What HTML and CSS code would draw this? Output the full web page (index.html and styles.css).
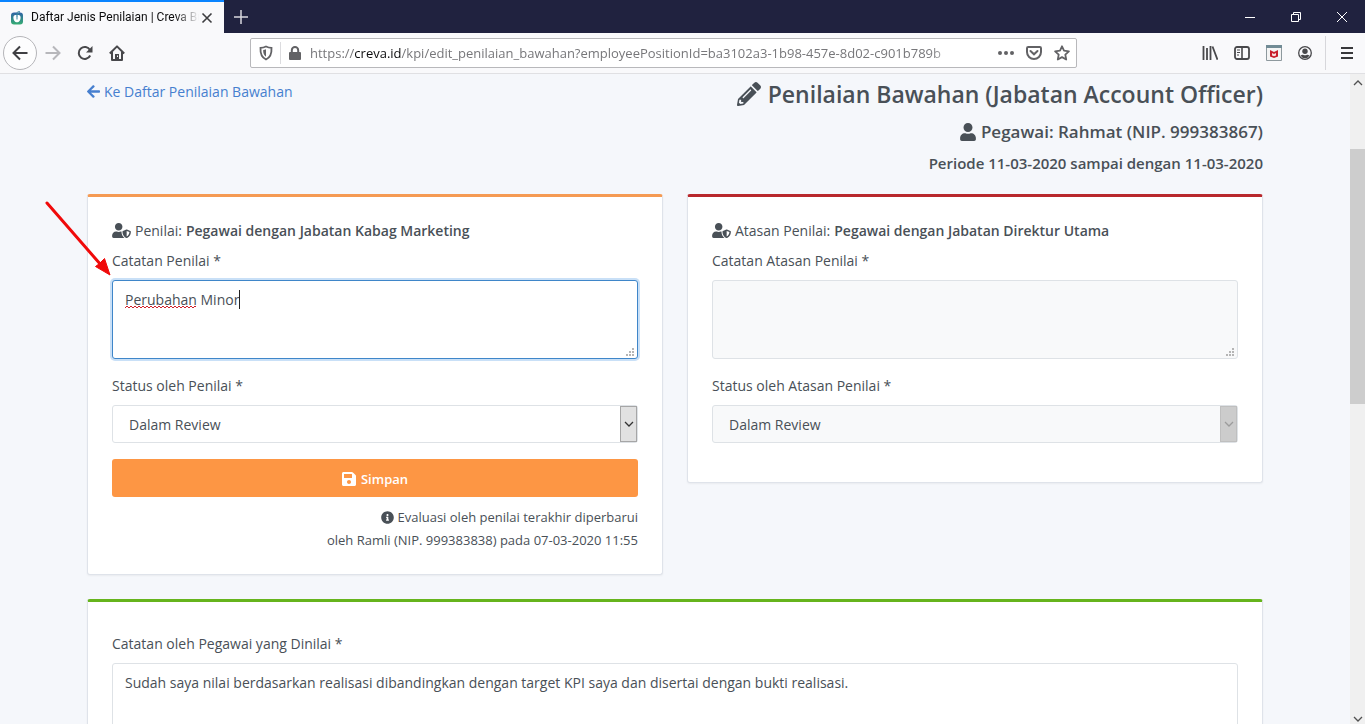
FILE: index.html
```html
<!DOCTYPE html>
<html lang="id">
<head>
<meta charset="utf-8">
<title>Daftar Jenis Penilaian | Creva</title>
<link rel="stylesheet" href="styles.css">
</head>
<body>
<svg class="defs" aria-hidden="true">
  <symbol id="i-shield-user" viewBox="0 0 640 512"><path d="M622.3 271.1l-115.2-45c-4.1-1.6-12.6-3.7-22.2 0l-115.2 45c-10.7 4.2-17.7 14-17.7 24.9 0 111.6 68.7 188.8 132.9 213.9 9.6 3.7 18 1.6 22.2 0C558.4 489.9 640 420.5 640 296c0-10.9-7-20.7-17.7-24.9zM496 462.4V273.3l95.5 37.3c-5.6 87.1-60.9 135.4-95.5 151.8zM224 256c70.7 0 128-57.3 128-128S294.7 0 224 0 96 57.3 96 128s57.3 128 128 128zm96 40c0-2.5.8-4.8 1.1-7.2-2.5-.1-4.9-.8-7.5-.8h-16.7c-22.2 10.2-46.9 16-72.9 16s-50.6-5.8-72.9-16h-16.7C60.2 288 0 348.2 0 422.4V464c0 26.5 21.5 48 48 48h352c6.8 0 13.3-1.5 19.2-4-54-42.9-99.2-116.7-99.2-212z"/></symbol>
  <symbol id="i-grip" viewBox="0 0 8 8"><path d="M6 0h2v2H6zM3 3h2v2H3zM6 3h2v2H6zM0 6h2v2H0zM3 6h2v2H3zM6 6h2v2H6z"/></symbol>
  <symbol id="i-chevron" viewBox="0 0 10 6"><path d="M1 1l4 4 4-4" fill="none" stroke="currentColor" stroke-width="1.3"/></symbol>
</svg>

<header class="browser">
  <div class="tabs">
    <div class="tab">
      <svg class="favicon" viewBox="0 0 14 14"><defs><linearGradient id="fav" x2="0" y2="1"><stop stop-color="#2f62a5"/><stop offset="1" stop-color="#35ad72"/></linearGradient></defs><rect x="1" y="1.5" width="12" height="12" rx="3" fill="url(#fav)"/><path d="M7 4.5C5 3.3 3.2 4.5 3.4 7c.2 2.700 1.800 4.600 3.600 4.300 1.800.3 3.400-1.600 3.600-4.300C10.800 4.500 9 3.300 7 4.500z" fill="#fff"/><path d="M7 6V2.500C7 1 8 .3 9.500.3 9.500 2 8.600 2.800 7 2.800M7 5.500v3" stroke="#3b87a0" fill="none"/></svg>
      <span class="tab-title">Daftar Jenis Penilaian | Creva Bu</span>
      <button class="plain" aria-label="Tutup tab"><svg width="12" height="12" viewBox="0 0 12 12"><path d="M1.500 1.500l9 9M10.500 1.500l-9 9" stroke="#3d3d40" stroke-width="1.600"/></svg></button>
    </div>
    <button class="plain new-tab" aria-label="Tab baru"><svg width="14" height="14" viewBox="0 0 14 14"><path d="M7 0v14M0 7h14" stroke="#d8d8de" stroke-width="1.500"/></svg></button>
    <div class="window-controls">
      <button class="plain" aria-label="Kecilkan"><svg width="10" height="10" viewBox="0 0 10 10"><path d="M0 5.500h10" stroke="#fff"/></svg></button>
      <button class="plain" aria-label="Pulihkan"><svg width="10" height="10" viewBox="0 0 10 10"><path d="M.5 2.500h7v7h-7zM2.500 2.500v-2h7v7h-2" fill="none" stroke="#fff"/></svg></button>
      <button class="plain" aria-label="Tutup"><svg width="10" height="10" viewBox="0 0 10 10"><path d="M0 0l10 10M10 0L0 10" stroke="#fff"/></svg></button>
    </div>
  </div>
  <div class="toolbar">
    <div class="nav-buttons">
      <button class="plain back" aria-label="Kembali"><svg width="16" height="16" viewBox="0 0 16 16"><path d="M15.500 8H1.500M8 1.500L1.500 8 8 14.500" fill="none" stroke="#3f3f43" stroke-width="2"/></svg></button>
      <button class="plain" aria-label="Maju"><svg width="16" height="16" viewBox="0 0 16 16"><path d="M.5 8h14M8 1.500L14.500 8 8 14.500" fill="none" stroke="#b7b7bb" stroke-width="2"/></svg></button>
      <button class="plain" aria-label="Muat ulang"><svg width="16" height="16" viewBox="0 0 16 16"><path d="M13.200 10.500A6 6 0 1 1 13 5" fill="none" stroke="#48484b" stroke-width="2"/><path d="M15.500 1v6.500H9z" fill="#48484b"/></svg></button>
      <button class="plain" aria-label="Beranda"><svg width="16" height="16" viewBox="0 0 16 16"><path d="M.8 8.500L8 1.400l7.200 7.100M3 7v8h10V7" fill="none" stroke="#48484b" stroke-width="2" stroke-linejoin="round"/><path d="M6 9h4v6H6z" fill="#48484b"/><path d="M8 10.500h1V12H8z" fill="#fff"/></svg></button>
    </div>
    <div class="url-bar">
      <svg class="shield" width="14" height="16" viewBox="0 0 14 16"><path d="M7 1.500c2 1 4 1.300 5.500 1.300C12.800 8 11.500 12.500 7 14.500 2.500 12.500 1.200 8 1.500 2.800 3 2.800 5 2.500 7 1.500z" fill="none" stroke="#626265" stroke-width="1.800"/><path d="M7 4.200v7.600C5 10.500 4 8 4.200 5 5.200 5 6.200 4.700 7 4.200z" fill="#626265"/></svg>
      <span class="divider"></span>
      <svg width="12" height="14" viewBox="0 0 12 14"><rect y="6" width="12" height="8" rx="1" fill="#626265"/><path d="M2.800 7V4.200a3.200 3.200 0 0 1 6.400 0V7" fill="none" stroke="#626265" stroke-width="2"/></svg>
      <div class="url">https://<b>creva.id</b>/kpi/edit_penilaian_bawahan?employeePositionId=ba3102a3-1b98-457e-8d02-c901b789b</div>
      <svg width="16" height="4" viewBox="0 0 16 4"><g fill="#626265"><circle cx="2" cy="2" r="2"/><circle cx="8" cy="2" r="2"/><circle cx="14" cy="2" r="2"/></g></svg>
      <svg width="16" height="14" viewBox="0 0 16 14"><path d="M2.200 1h11.600q1.200 0 1.200 1.200V6c0 4-3.200 7-7 7S1 10 1 6V2.200Q1 1 2.200 1z" fill="none" stroke="#626265" stroke-width="2"/><path d="M4.500 5L8 8.300 11.500 5" fill="none" stroke="#626265" stroke-width="2" stroke-linecap="round"/></svg>
      <svg width="16" height="16" viewBox="0 0 16 16"><path d="M8 1.300l2 4.400 4.900.6-3.600 3.300.9 4.900L8 12.100l-4.200 2.400.9-4.900L1.100 6.300 6 5.700z" fill="none" stroke="#626265" stroke-width="1.800" stroke-linejoin="round"/></svg>
    </div>
    <div class="tools">
      <svg width="16" height="14" viewBox="0 0 16 14"><path d="M1.500 0v14M5 2v12M8.500 0v14M10.500.5l5 13.200" stroke="#48484b" stroke-width="1.800"/></svg>
      <svg width="16" height="14" viewBox="0 0 16 14"><rect x="1" y="1" width="14" height="12" rx="2" fill="none" stroke="#48484b" stroke-width="1.800"/><path d="M8 1v12" stroke="#48484b" stroke-width="1.600"/><path d="M3 4h3M3 6.500h3M3 9h2" stroke="#48484b"/></svg>
      <svg width="16" height="16" viewBox="0 0 16 16"><path d="M.5.500h15v15H.500z" fill="#f4f4f4" stroke="#8e999e"/><path d="M0 0h16v3H0z" fill="#718b95"/><path d="M4 5l4 2 4-2v6.500L8 13l-4-1.500z" fill="#c81e2b"/><path d="M6 8l2 1 2-1v2.500l-2 .7-2-.7z" fill="#f7dede"/></svg>
      <svg width="14" height="14" viewBox="0 0 14 14"><circle cx="7" cy="7" r="6.300" fill="none" stroke="#48484b" stroke-width="1.300"/><circle cx="7" cy="5.300" r="2.700" fill="#48484b"/><path d="M2.500 9.500Q4 8.500 5 8.700q2 1 4 0 1-.2 2.500.8Q10 12.200 7 12.200T2.500 9.500z" fill="#48484b"/></svg>
      <div class="menu"><svg width="12" height="12" viewBox="0 0 12 12"><path d="M0 1h12M0 6h12M0 11h12" stroke="#38383b" stroke-width="2"/></svg></div>
    </div>
  </div>
</header>

<div class="viewport">
  <main class="page">
    <div class="container">
      <div class="page-head">
        <a class="back-link" href="#"><svg width="13" height="15" viewBox="0 0 448 512"><path d="M257.5 445.1l-22.2 22.2c-9.4 9.4-24.6 9.4-33.9 0L7 273c-9.4-9.4-9.4-24.6 0-33.9L201.4 44.7c9.4-9.4 24.6-9.4 33.9 0l22.2 22.2c9.5 9.5 9.3 25-.4 34.3L136.6 216H424c13.3 0 24 10.7 24 24v32c0 13.3-10.700 24-24 24H136.600l120.500 114.800c9.800 9.300 10 24.800.4 34.300z"/></svg>Ke Daftar Penilaian Bawahan</a>
        <div class="titles">
          <h1><svg width="24" height="24" viewBox="0 0 512 512"><path d="M497.9 142.1l-46.1 46.1c-4.7 4.7-12.3 4.7-17 0l-111-111c-4.7-4.7-4.7-12.3 0-17l46.1-46.1c18.7-18.7 49.1-18.7 67.9 0l60.1 60.1c18.8 18.7 18.8 49.1 0 67.9zM284.2 99.8L21.6 362.4.4 483.9c-2.9 16.4 11.4 30.6 27.8 27.8l121.5-21.3 262.6-262.6c4.7-4.7 4.7-12.3 0-17l-111-111c-4.8-4.7-12.4-4.7-17.1 0zM124.1 339.9c-5.5-5.5-5.5-14.3 0-19.8l154-154c5.5-5.5 14.3-5.5 19.8 0s5.5 14.3 0 19.8l-154 154c-5.5 5.5-14.3 5.5-19.8 0zM88 424h48v36.3l-64.5 11.3-31.1-31.1L51.7 376H88v48z"/></svg>Penilaian Bawahan (Jabatan Account Officer)</h1>
          <h2><svg width="16" height="18" viewBox="0 0 448 512"><path d="M224 256c70.7 0 128-57.3 128-128S294.7 0 224 0 96 57.3 96 128s57.3 128 128 128zm89.6 32h-16.7c-22.2 10.2-46.9 16-72.9 16s-50.6-5.8-72.9-16h-16.7C60.2 288 0 348.2 0 422.4V464c0 26.5 21.5 48 48 48h352c26.5 0 48-21.5 48-48v-41.6c0-74.2-60.2-134.4-134.4-134.4z"/></svg>Pegawai: Rahmat (NIP. 999383867)</h2>
          <h3>Periode 11-03-2020 sampai dengan 11-03-2020</h3>
        </div>
      </div>

      <div class="cards">
        <form class="card card-orange">
          <p class="who"><svg width="19" height="15"><use href="#i-shield-user"/></svg>Penilai: <strong>Pegawai dengan Jabatan Kabag Marketing</strong></p>
          <label for="note1">Catatan Penilai *</label>
          <div class="field">
            <textarea id="note1" class="control focused" spellcheck="false">Perubahan Minor</textarea>
            <svg class="squiggle" width="71" height="4"><defs><pattern id="wave" width="4" height="4" patternUnits="userSpaceOnUse"><path d="M0 3l2-2 2 2" fill="none" stroke="#d0202a"/></pattern></defs><rect width="71" height="4" fill="url(#wave)"/></svg>
            <span class="caret"></span>
            <svg class="grip"><use href="#i-grip"/></svg>
          </div>
          <label for="status1">Status oleh Penilai *</label>
          <div class="field">
            <select id="status1" class="control"><option>Dalam Review</option></select>
            <span class="drop"><svg width="10" height="6"><use href="#i-chevron"/></svg></span>
          </div>
          <button type="button" class="save"><svg width="14" height="16" viewBox="0 0 448 512"><path d="M433.941 129.941l-83.882-83.882A48 48 0 0 0 316.118 32H48C21.490 32 0 53.490 0 80v352c0 26.510 21.490 48 48 48h352c26.510 0 48-21.490 48-48V163.882a48 48 0 0 0-14.059-33.941zM224 416c-35.346 0-64-28.654-64-64 0-35.346 28.654-64 64-64s64 28.654 64 64c0 35.346-28.654 64-64 64zm96-304.520V212c0 6.627-5.373 12-12 12H76c-6.627 0-12-5.373-12-12V108c0-6.627 5.373-12 12-12h228.520c3.183 0 6.235 1.264 8.485 3.515l3.480 3.480A11.996 11.996 0 0 1 320 111.480z"/></svg>Simpan</button>
          <p class="updated"><svg width="13" height="13" viewBox="0 0 512 512"><path d="M256 8C119.043 8 8 119.083 8 256c0 136.997 111.043 248 248 248s248-111.003 248-248C504 119.083 392.957 8 256 8zm0 110c23.196 0 42 18.804 42 42s-18.804 42-42 42-42-18.804-42-42 18.804-42 42-42zm56 254c0 6.627-5.373 12-12 12h-88c-6.627 0-12-5.373-12-12v-24c0-6.627 5.373-12 12-12h12v-64h-12c-6.627 0-12-5.373-12-12v-24c0-6.627 5.373-12 12-12h64c6.627 0 12 5.373 12 12v100h12c6.627 0 12 5.373 12 12v24z"/></svg>Evaluasi oleh penilai terakhir diperbarui<br>oleh Ramli (NIP. 999383838) pada 07-03-2020 11:55</p>
        </form>

        <form class="card card-red">
          <p class="who"><svg width="19" height="15"><use href="#i-shield-user"/></svg>Atasan Penilai: <strong>Pegawai dengan Jabatan Direktur Utama</strong></p>
          <label for="note2">Catatan Atasan Penilai *</label>
          <div class="field">
            <textarea id="note2" class="control" disabled></textarea>
            <svg class="grip"><use href="#i-grip"/></svg>
          </div>
          <label for="status2">Status oleh Atasan Penilai *</label>
          <div class="field">
            <select id="status2" class="control" disabled><option>Dalam Review</option></select>
            <span class="drop drop-off"><svg width="10" height="6"><use href="#i-chevron"/></svg></span>
          </div>
        </form>
      </div>

      <form class="card card-green">
        <label for="note3">Catatan oleh Pegawai yang Dinilai *</label>
        <div class="field">
          <textarea id="note3" class="control" spellcheck="false">Sudah saya nilai berdasarkan realisasi dibandingkan dengan target KPI saya dan disertai dengan bukti realisasi.</textarea>
        </div>
      </form>
    </div>
    <svg class="pointer" viewBox="0 0 68 78" aria-hidden="true"><path d="M2 2l54 62" stroke="#f00a0a" stroke-width="3" stroke-linecap="round"/><path d="M65 74L50.500 65.500l4-3 5-5z" fill="#f00a0a" stroke="#f00a0a"/></svg>
  </main>
  <div class="scrollbar" aria-hidden="true">
    <svg class="up" width="10" height="6"><use href="#i-chevron"/></svg>
    <div class="track"><div class="before"></div><div class="thumb"></div><div class="after"></div></div>
    <svg width="10" height="6"><use href="#i-chevron"/></svg>
  </div>
</div>
</body>
</html>
```

FILE: styles.css
```css
* { box-sizing: border-box; }

body {
  margin: 0;
  height: 100vh;
  display: flex;
  flex-direction: column;
  overflow: hidden;
  background: #f5f7fb;
  color: #495057;
  font: 14px/23px "Open Sans", "Noto Sans", sans-serif;
}

h1, h2, h3, p { margin: 0; }
svg { flex: none; }
.defs { position: absolute; width: 0; height: 0; }

.plain {
  display: flex;
  align-items: center;
  justify-content: center;
  padding: 0;
  border: 0;
  background: none;
}

/* Browser frame */
.tabs { display: flex; height: 33px; background: #20223f; }
.tab {
  display: flex;
  align-items: center;
  width: 224px;
  padding: 0 11px 0 10px;
  border-top: 2px solid #0a84ff;
  background: #f9f9fb;
}
.favicon { width: 14px; height: 14px; margin-right: 7px; }
.tab-title {
  flex: 1;
  overflow: hidden;
  white-space: nowrap;
  color: #0c0c0d;
  font-family: Roboto, "Open Sans", sans-serif;
  font-size: 12px;
  -webkit-mask-image: linear-gradient(to left, transparent, #000 24px);
  mask-image: linear-gradient(to left, transparent, #000 24px);
}
.tab .plain { margin-left: 2px; }
.new-tab { width: 34px; }
.window-controls { display: flex; margin-left: auto; }
.window-controls .plain { width: 46px; }

.toolbar {
  display: flex;
  align-items: center;
  height: 41px;
  border-bottom: 1px solid #e0e0e3;
  background: #f9f9fb;
}
.nav-buttons { display: flex; align-items: center; gap: 16px; width: 250px; padding-left: 3px; }
.back { width: 34px; height: 34px; margin-right: -8px; border: 1px solid #b5b5b9; border-radius: 50%; background: #fdfdfe; }
.url-bar {
  flex: 1;
  display: flex;
  align-items: center;
  gap: 12px;
  height: 30px;
  padding: 0 6px 0 8px;
  border: 1px solid #b8b8bb;
  border-radius: 2px;
  background: #fff;
}
.shield { margin-right: -5px; }
.divider { width: 1px; height: 22px; margin-right: -4px; background: #dcdcdf; }
.url {
  flex: 1;
  margin-right: 24px;
  margin-left: -3px;
  overflow: hidden;
  white-space: nowrap;
  color: #77777a;
  font-size: 13px;
  -webkit-mask-image: linear-gradient(to left, transparent, #000 32px);
  mask-image: linear-gradient(to left, transparent, #000 32px);
}
.url b { color: #0c0c0d; font-weight: 400; }
.tools { display: flex; align-items: center; gap: 16px; width: 288px; padding-left: 125px; }
.menu { display: flex; align-items: center; height: 34px; padding-left: 15px; margin-left: -3px; border-left: 1px solid #d7d7db; }

/* Page */
.viewport { flex: 1; display: flex; min-height: 0; }
.page { position: relative; flex: 1; overflow: hidden; }
.container { max-width: 1200px; margin: 0 auto; padding: 0 12px; }

.page-head { display: flex; justify-content: space-between; padding-top: 5px; margin-bottom: 19px; }
.page-head svg, .who svg, .save svg, .updated svg { fill: currentColor; }
.back-link { display: flex; align-items: center; gap: 4px; height: 25px; color: #467fcf; text-decoration: none; }
.titles { display: flex; flex-direction: column; align-items: flex-end; }
.titles h1, .titles h2 { display: flex; align-items: center; }
.titles h1 { gap: 7px; font-size: 23px; line-height: 30px; font-weight: 600; }
.titles h2 { gap: 5px; margin: 9px 0 5px; font-size: 17px; line-height: 28px; font-weight: 600; }
.titles h3 { font-size: 15px; line-height: 24px; font-weight: 600; }

.cards { display: grid; grid-template-columns: 1fr 1fr; align-items: start; gap: 24px; margin-bottom: 24px; }
.card {
  padding: 22px 24px 24px;
  border: 1px solid #dfe3ea;
  border-top: 3px solid;
  border-radius: 3px;
  background: #fff;
  box-shadow: 0 1px 2px rgba(0, 0, 0, .05);
}
.card-orange { border-top-color: #f59a53; }
.card-red { border-top-color: #b8282c; }
.card-green { border-top-color: #66b41c; padding-top: 30px; }

.who { display: flex; align-items: center; gap: 4px; margin-bottom: 7px; }
.who strong { font-weight: 600; }
label { display: block; margin-bottom: 8px; }
.field { position: relative; margin-bottom: 15px; }
.control {
  display: block;
  width: 100%;
  border: 1px solid #dee2e6;
  border-radius: 3px;
  outline: 0;
  background: #fff;
  color: #495057;
  font: inherit;
  appearance: none;
  opacity: 1;
}
.control:disabled { background: #f8f9fa; }
textarea.control { height: 79px; padding: 7px 12px; resize: none; overflow: hidden; }
select.control { height: 38px; padding: 0 32px 0 16px; }
.control.focused { border-color: #3f86c9; box-shadow: 0 0 0 2px #c9e0f7; }
.card-green .control { height: 120px; }

.grip { position: absolute; right: 4px; bottom: 3px; width: 8px; height: 8px; fill: #b5b5b5; }
.squiggle { position: absolute; left: 13px; top: 25px; }
.caret { position: absolute; left: 127px; top: 10px; width: 1px; height: 19px; background: #222; }
.drop {
  position: absolute;
  top: 1px;
  right: 1px;
  bottom: 1px;
  display: grid;
  place-items: center;
  width: 17px;
  border: 1px solid #a6a6a6;
  background: #e1e1e1;
  color: #333;
  pointer-events: none;
}
.drop-off { border-color: #bfbfbf; background: #ccc; color: #9c9c9c; }

.save {
  display: flex;
  align-items: center;
  justify-content: center;
  gap: 5px;
  width: 100%;
  height: 38px;
  margin-top: 16px;
  padding: 2px 0 0;
  border: 0;
  border-radius: 3px;
  background: #fd9644;
  color: #fff;
  font: 600 13px/23px "Open Sans", "Noto Sans", sans-serif;
}
.updated { margin-top: 9px; margin-bottom: -2px; text-align: right; font-size: 13px; }
.updated svg { margin-right: 4px; vertical-align: -2px; }

.pointer { position: absolute; left: 45px; top: 127px; width: 68px; height: 78px; }

/* Scrollbar */
.scrollbar { display: flex; flex-direction: column; align-items: center; width: 15px; padding: 6px 0 2px; background: #f0f0f0; color: #505050; }
.scrollbar .up { transform: rotate(180deg); }
.track { flex: 1; display: flex; flex-direction: column; width: 100%; }
.before { flex: 63; }
.thumb { flex: 253; background: #cdcdcd; }
.after { flex: 311; }
```
